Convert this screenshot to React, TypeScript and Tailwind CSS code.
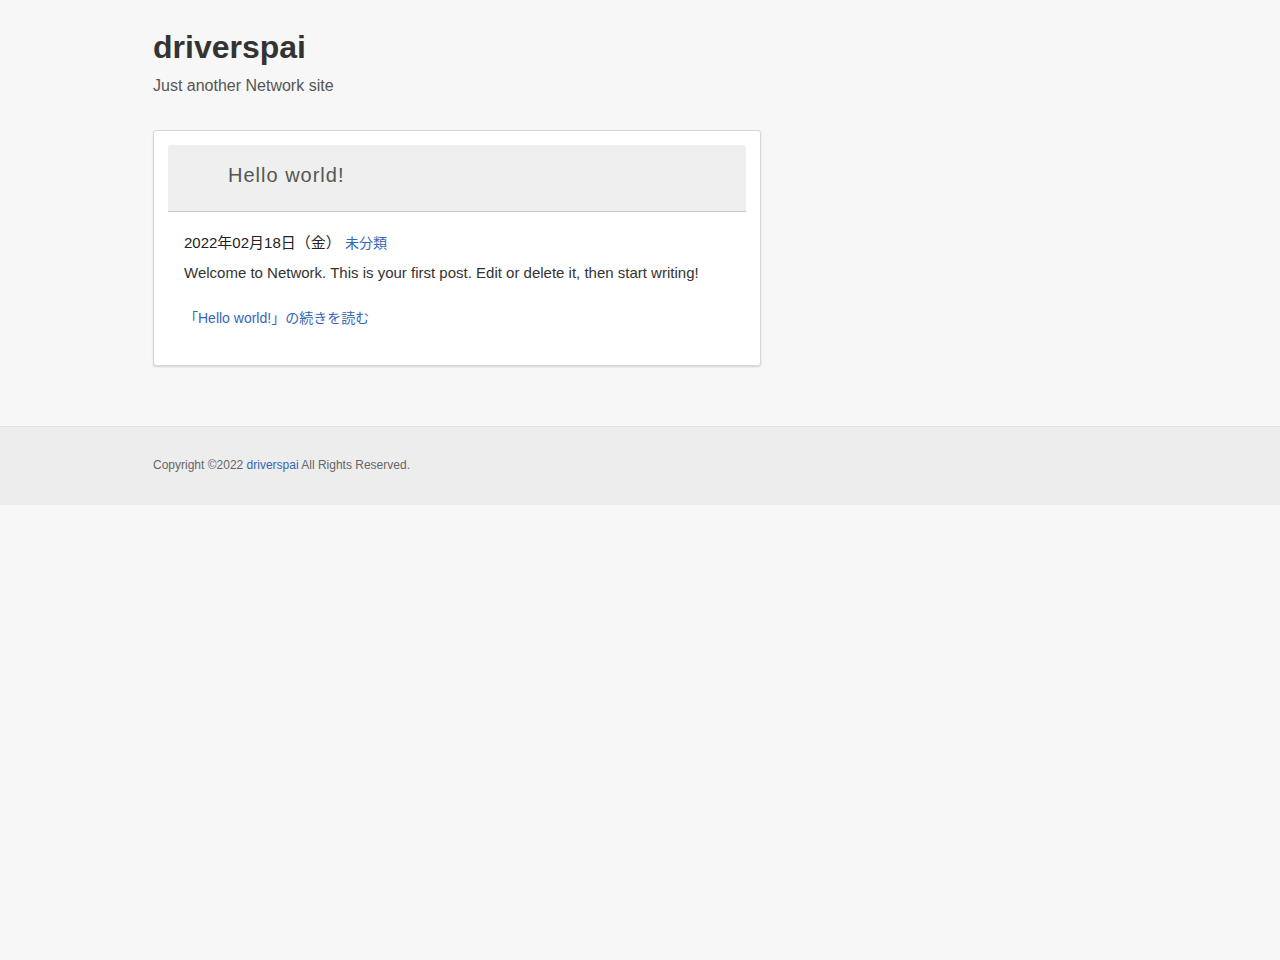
import React from 'react';

const font = { fontFamily: '"Liberation Sans", Arial, "Noto Sans CJK JP", sans-serif' };

const App: React.FC = () => {
  return (
    <div className="min-h-[960px] bg-[#f7f7f7] text-[#333]" style={font}>
      <header className="mx-auto w-[974px] pt-[29px] pb-[34px]">
        <h1 className="text-[32px] font-bold leading-[36px] text-[#333]">driverspai</h1>
        <p className="mt-[11px] text-[16px] leading-[20px] text-[#555]">Just another Network site</p>
      </header>

      <main className="mx-auto w-[974px] pb-[60px]">
        <article className="w-[608px] rounded-[3px] border border-[#d8d8d8] bg-white p-[14px] shadow-[0_1px_2px_rgba(0,0,0,0.15)]">
          <div className="rounded-t-[3px] border-b border-[#c8c8c8] bg-[#efefef] pl-[60px] pt-[17px] pb-[23px]">
            <h2 className="text-[20px] leading-[26px] tracking-[1px] text-[#555]">Hello world!</h2>
          </div>
          <div className="px-[16px] pt-[22px] pb-[24px]">
            <div className="text-[15px] leading-[18px] text-[#222]">
              2022年02月18日（金） <a href="#" className="text-[14px] text-[#3366bb]">未分類</a>
            </div>
            <p className="mt-[11px] text-[15px] leading-[20px] text-[#333]">
              Welcome to Network. This is your first post. Edit or delete it, then start writing!
            </p>
            <a href="#" className="mt-[26px] block text-[14px] leading-[18px] text-[#3366bb]">
              「Hello world!」の続きを読む
            </a>
          </div>
        </article>
      </main>

      <footer className="border-t border-[#e2e2e2] bg-[#ededed] pt-[29px] pb-[31px]">
        <div className="mx-auto w-[974px] text-[12px] leading-[18px] text-[#666]">
          Copyright ©2022 <a href="#" className="text-[#3366bb]">driverspai</a> All Rights Reserved.
        </div>
      </footer>
    </div>
  );
};

export default App;
